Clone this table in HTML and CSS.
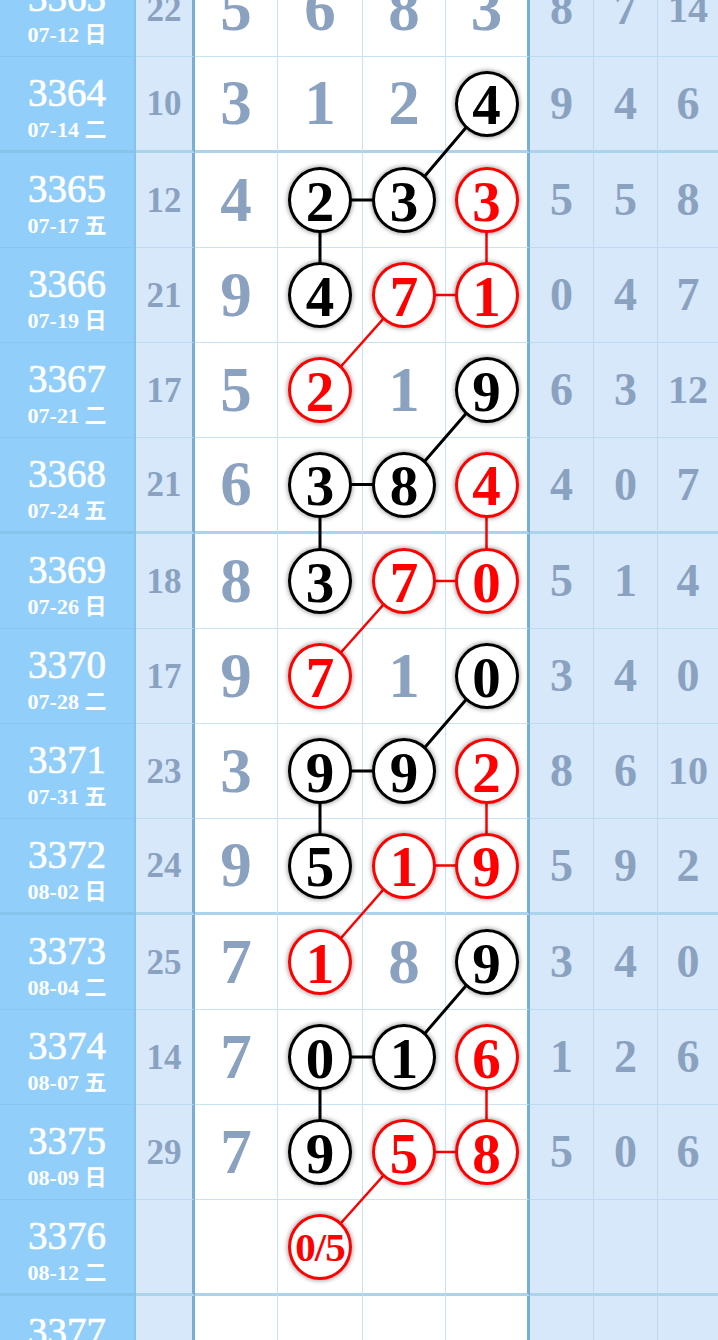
FILE: index.html
```html
<!DOCTYPE html>
<html lang="zh-CN">
<head>
    <meta charset="UTF-8">
    <meta name="viewport" content="width=device-width, initial-scale=1.0">
    <title>走势图</title>
    <link rel="stylesheet" href="styles.css">
</head>
<body>
    <div class="chart">
        <!-- connecting lines, drawn under the balls -->
        <svg class="lines" width="718" height="1430" viewBox="0 0 718 1430">
            <g class="black">
                <polyline points="486.5,141.5 404.5,238 320,238 320,333"/>
                <polyline points="486.5,428 404.5,522.5 320,522.5 320,619"/>
                <polyline points="486.5,714 404.5,809 320,809 320,903.5"/>
                <polyline points="486.5,1000 404.5,1095 320,1095 320,1190"/>
            </g>
            <g class="red">
                <polyline points="486.5,238 486.5,333 404.5,333 320,428"/>
                <polyline points="486.5,522.5 486.5,619 404.5,619 320,714"/>
                <polyline points="486.5,809 486.5,903.5 404.5,903.5 320,1000"/>
                <polyline points="486.5,1095 486.5,1190 404.5,1190 320,1284.5"/>
            </g>
        </svg>

        <div class="row">
            <div class="period"><b>3363</b><span>07-12 日</span></div>
            <div class="sum">22</div>
            <div class="cell">5</div><div class="cell">6</div><div class="cell">8</div><div class="cell">3</div>
            <div class="dist">8</div><div class="dist">7</div><div class="dist two">14</div>
        </div>
        <div class="row end">
            <div class="period"><b>3364</b><span>07-14 二</span></div>
            <div class="sum">10</div>
            <div class="cell">3</div><div class="cell">1</div><div class="cell">2</div><div class="cell"><i class="ball">4</i></div>
            <div class="dist">9</div><div class="dist">4</div><div class="dist">6</div>
        </div>
        <div class="row">
            <div class="period"><b>3365</b><span>07-17 五</span></div>
            <div class="sum">12</div>
            <div class="cell">4</div><div class="cell"><i class="ball">2</i></div><div class="cell"><i class="ball">3</i></div><div class="cell"><i class="ball red">3</i></div>
            <div class="dist">5</div><div class="dist">5</div><div class="dist">8</div>
        </div>
        <div class="row">
            <div class="period"><b>3366</b><span>07-19 日</span></div>
            <div class="sum">21</div>
            <div class="cell">9</div><div class="cell"><i class="ball">4</i></div><div class="cell"><i class="ball red">7</i></div><div class="cell"><i class="ball red">1</i></div>
            <div class="dist">0</div><div class="dist">4</div><div class="dist">7</div>
        </div>
        <div class="row">
            <div class="period"><b>3367</b><span>07-21 二</span></div>
            <div class="sum">17</div>
            <div class="cell">5</div><div class="cell"><i class="ball red">2</i></div><div class="cell">1</div><div class="cell"><i class="ball">9</i></div>
            <div class="dist">6</div><div class="dist">3</div><div class="dist two">12</div>
        </div>
        <div class="row end">
            <div class="period"><b>3368</b><span>07-24 五</span></div>
            <div class="sum">21</div>
            <div class="cell">6</div><div class="cell"><i class="ball">3</i></div><div class="cell"><i class="ball">8</i></div><div class="cell"><i class="ball red">4</i></div>
            <div class="dist">4</div><div class="dist">0</div><div class="dist">7</div>
        </div>
        <div class="row">
            <div class="period"><b>3369</b><span>07-26 日</span></div>
            <div class="sum">18</div>
            <div class="cell">8</div><div class="cell"><i class="ball">3</i></div><div class="cell"><i class="ball red">7</i></div><div class="cell"><i class="ball red">0</i></div>
            <div class="dist">5</div><div class="dist">1</div><div class="dist">4</div>
        </div>
        <div class="row">
            <div class="period"><b>3370</b><span>07-28 二</span></div>
            <div class="sum">17</div>
            <div class="cell">9</div><div class="cell"><i class="ball red">7</i></div><div class="cell">1</div><div class="cell"><i class="ball">0</i></div>
            <div class="dist">3</div><div class="dist">4</div><div class="dist">0</div>
        </div>
        <div class="row">
            <div class="period"><b>3371</b><span>07-31 五</span></div>
            <div class="sum">23</div>
            <div class="cell">3</div><div class="cell"><i class="ball">9</i></div><div class="cell"><i class="ball">9</i></div><div class="cell"><i class="ball red">2</i></div>
            <div class="dist">8</div><div class="dist">6</div><div class="dist two">10</div>
        </div>
        <div class="row end">
            <div class="period"><b>3372</b><span>08-02 日</span></div>
            <div class="sum">24</div>
            <div class="cell">9</div><div class="cell"><i class="ball">5</i></div><div class="cell"><i class="ball red">1</i></div><div class="cell"><i class="ball red">9</i></div>
            <div class="dist">5</div><div class="dist">9</div><div class="dist">2</div>
        </div>
        <div class="row">
            <div class="period"><b>3373</b><span>08-04 二</span></div>
            <div class="sum">25</div>
            <div class="cell">7</div><div class="cell"><i class="ball red">1</i></div><div class="cell">8</div><div class="cell"><i class="ball">9</i></div>
            <div class="dist">3</div><div class="dist">4</div><div class="dist">0</div>
        </div>
        <div class="row">
            <div class="period"><b>3374</b><span>08-07 五</span></div>
            <div class="sum">14</div>
            <div class="cell">7</div><div class="cell"><i class="ball">0</i></div><div class="cell"><i class="ball">1</i></div><div class="cell"><i class="ball red">6</i></div>
            <div class="dist">1</div><div class="dist">2</div><div class="dist">6</div>
        </div>
        <div class="row">
            <div class="period"><b>3375</b><span>08-09 日</span></div>
            <div class="sum">29</div>
            <div class="cell">7</div><div class="cell"><i class="ball">9</i></div><div class="cell"><i class="ball red">5</i></div><div class="cell"><i class="ball red">8</i></div>
            <div class="dist">5</div><div class="dist">0</div><div class="dist">6</div>
        </div>
        <div class="row end">
            <div class="period"><b>3376</b><span>08-12 二</span></div>
            <div class="sum"></div>
            <div class="cell"></div><div class="cell"><i class="ball red small">0/5</i></div><div class="cell"></div><div class="cell"></div>
            <div class="dist"></div><div class="dist"></div><div class="dist"></div>
        </div>
        <div class="row">
            <div class="period"><b>3377</b><span>08-15 五</span></div>
            <div class="sum"></div>
            <div class="cell"></div><div class="cell"></div><div class="cell"></div><div class="cell"></div>
            <div class="dist"></div><div class="dist"></div><div class="dist"></div>
        </div>
    </div>
</body>
</html>
```

FILE: styles.css
```css
body {
    margin: 0;
    background: #fff;
    font-family: "Liberation Serif", "Noto Sans CJK SC", serif;
    overflow: hidden;
}
.chart {
    position: relative;
    width: 718px;
    margin-top: -38px;
}
.lines {
    position: absolute;
    top: 0;
    left: 0;
    z-index: 1;
    pointer-events: none;
}
.lines polyline {
    fill: none;
}
.lines .black polyline {
    stroke: #000;
    stroke-width: 3;
}
.lines .red polyline {
    stroke: #f00;
    stroke-width: 2.5;
}

.row {
    display: grid;
    grid-template-columns: 136px 59px 83px 85px 83px 84px 64px 64px 60px;
    height: 95px;
}
.row.end {
    height: 96px;
}
.row > div {
    box-sizing: border-box;
    display: flex;
    align-items: center;
    justify-content: center;
    border-bottom: 1px solid #c9e2f2;
    border-right: 1px solid #c9e2f2;
    font-weight: bold;
    color: #8aa1c0;
    line-height: 1;
}
.row.end > div {
    border-bottom: 3px solid #acd3ec;
}

.row > .period {
    flex-direction: column;
    padding-top: 9px;
    background: #91cffa;
    border-right: 2px solid #84c3ee;
    border-bottom-color: #86c6f0;
    color: #fff;
}
.row.end > .period {
    border-bottom-color: #86c4ec;
}
.period b {
    font-weight: normal;
    font-size: 39px;
    line-height: 38px;
    -webkit-text-stroke: 0.6px #fff;
}
.period span {
    font-size: 22px;
    line-height: 26px;
    margin-top: 5px;
}

.row > .sum {
    background: #d6e8f9;
    border-right: 3px solid #79aed4;
    border-bottom-color: #bcdaf0;
    font-size: 35px;
}
.row > .cell {
    background: #fff;
    font-size: 63px;
}
.row > .cell:nth-child(6) {
    border-right: 3px solid #79aed4;
}
.row > .dist {
    background: #d6e8f9;
    border-right-color: #b9d9ee;
    border-bottom-color: #bcdaf0;
    font-size: 46px;
}
.row > .dist:last-child {
    border-right: none;
}
.row > .dist.two {
    font-size: 40px;
}

.ball {
    position: relative;
    z-index: 2;
    display: flex;
    align-items: center;
    justify-content: center;
    width: 58px;
    height: 58px;
    border: 3px solid #000;
    border-radius: 50%;
    background: #fff;
    box-shadow: 0 0 4px 1px rgba(0,0,0,0.35);
    color: #000;
    font-style: normal;
    font-size: 57px;
    padding-top: 2px;
    box-sizing: content-box;
}
.ball.red {
    border-color: #f00;
    color: #f00;
}
.ball.small {
    font-size: 41px;
    letter-spacing: -1px;
}
```
